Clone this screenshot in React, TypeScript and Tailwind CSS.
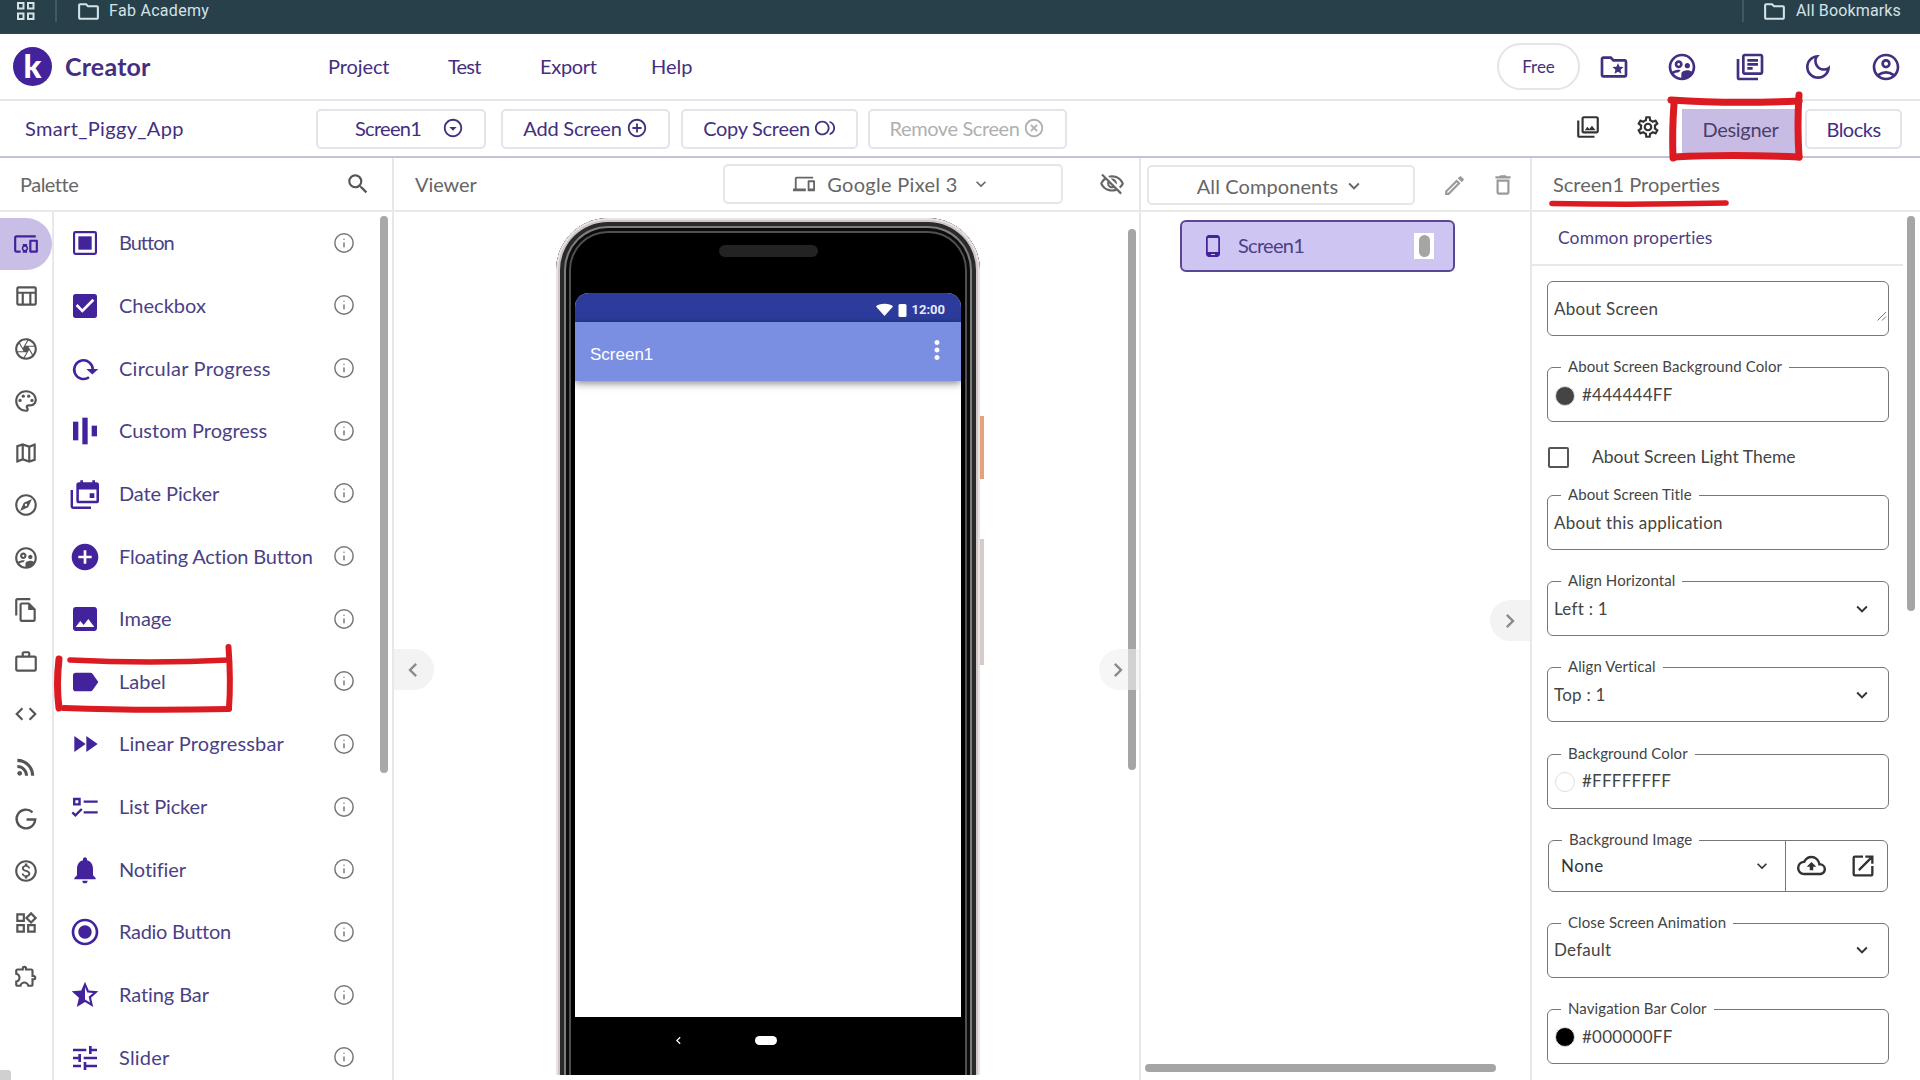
import React from 'react';
import { Info } from 'lucide-react';
import {
  MdAddCircle,
  MdAddCircleOutline,
  MdCheckBox,
  MdCode,
  MdDevices,
  MdDevicesOther,
  MdFastForward,
  MdHighlightOff,
  MdImage,
  MdKeyboardArrowDown,
  MdLabel,
  MdMoreVert,
  MdNotifications,
  MdOpenInNew,
  MdOutlineAccountCircle,
  MdOutlineArrowDropDownCircle,
  MdOutlineBackup,
  MdOutlineCamera,
  MdOutlineDarkMode,
  MdOutlineDelete,
  MdOutlineEdit,
  MdOutlineExplore,
  MdOutlineExtension,
  MdOutlineFileCopy,
  MdOutlineFolder,
  MdOutlineFolderSpecial,
  MdOutlineLibraryBooks,
  MdOutlineMap,
  MdOutlineMonetizationOn,
  MdOutlinePalette,
  MdOutlinePhotoLibrary,
  MdOutlineSettings,
  MdOutlineSupervisedUserCircle,
  MdOutlineTableChart,
  MdOutlineVisibilityOff,
  MdOutlineWidgets,
  MdOutlineWorkOutline,
  MdPhoneAndroid,
  MdRadioButtonChecked,
  MdRssFeed,
  MdSearch,
  MdStarHalf,
  MdToll,
  MdTune,
  MdChevronLeft,
  MdChevronRight,
} from 'react-icons/md';

type IconType = React.ComponentType<{ size?: number; className?: string }>;

const ButtonIcon: IconType = ({ size = 24 }) => (
  <svg width={size} height={size} viewBox="0 0 24 24">
    <rect x="3.8" y="3.8" width="16.4" height="16.4" rx="1" fill="none" stroke="currentColor" strokeWidth="1.6" />
    <rect x="7" y="7" width="10" height="10" fill="currentColor" />
  </svg>
);

const CircularIcon: IconType = ({ size = 24 }) => (
  <svg width={size} height={size} viewBox="0 0 24 24">
    <path d="M15 18.2A7 7 0 1 1 17.9 12.500" fill="none" stroke="currentColor" strokeWidth="1.9" />
    <path d="M13 12h9l-4.500 4.200z" fill="currentColor" />
  </svg>
);

const BarsIcon: IconType = ({ size = 24 }) => (
  <svg width={size} height={size} viewBox="0 0 24 24" fill="currentColor">
    <rect x="3" y="5" width="4" height="14" />
    <rect x="10" y="2" width="4" height="20" />
    <rect x="17" y="8" width="4" height="8" />
  </svg>
);

const DateIcon: IconType = ({ size = 24 }) => (
  <svg width={size} height={size} viewBox="0 0 24 24" fill="currentColor">
    <path
      fillRule="evenodd"
      d="M7.5 3.2h1V1.6h2v1.6h7V1.6h2v1.6h1a2 2 0 0 1 2 2V17a2 2 0 0 1-2 2h-13a2 2 0 0 1-2-2V5.200a2 2 0 0 1 2-2zM7.400 8.600v8.400h13.200V8.600z"
    />
    <path d="M15.500 11.500h3.500v3.500h-3.500zM1.200 9h1.800v12.400h13.500v1.800H3a1.800 1.800 0 0 1-1.800-1.800z" />
  </svg>
);

const ListIcon: IconType = ({ size = 24 }) => (
  <svg width={size} height={size} viewBox="0 0 24 24" fill="none" stroke="currentColor" strokeWidth="1.8">
    <path d="M3.900 6h4v4h-4zM11 8h10.500M11 16h10.500M2.500 16l2.300 2.200L9.600 13.500" />
  </svg>
);

const GoogleIcon: IconType = ({ size = 24 }) => (
  <svg width={size} height={size} viewBox="0 0 24 24" fill="none" stroke="currentColor" strokeWidth="2.2">
    <path d="M18 5.900A8.600 8.600 0 1 0 20.500 12.500H12.500" />
  </svg>
);

const rail: IconType[] = [
  MdDevicesOther,
  MdOutlineTableChart,
  MdOutlineCamera,
  MdOutlinePalette,
  MdOutlineMap,
  MdOutlineExplore,
  MdOutlineSupervisedUserCircle,
  MdOutlineFileCopy,
  MdOutlineWorkOutline,
  MdCode,
  MdRssFeed,
  GoogleIcon,
  MdOutlineMonetizationOn,
  MdOutlineWidgets,
  MdOutlineExtension,
];

const palette: { name: string; icon: IconType; tracking?: string }[] = [
  { name: 'Button', icon: ButtonIcon, tracking: 'tracking-[-1px]' },
  { name: 'Checkbox', icon: MdCheckBox },
  { name: 'Circular Progress', icon: CircularIcon, tracking: 'tracking-[0.25px]' },
  { name: 'Custom Progress', icon: BarsIcon },
  { name: 'Date Picker', icon: DateIcon, tracking: 'tracking-[-0.1px]' },
  { name: 'Floating Action Button', icon: MdAddCircle, tracking: 'tracking-[-0.2px]' },
  { name: 'Image', icon: MdImage },
  { name: 'Label', icon: MdLabel },
  { name: 'Linear Progressbar', icon: MdFastForward, tracking: 'tracking-[0.15px]' },
  { name: 'List Picker', icon: ListIcon, tracking: 'tracking-[-0.15px]' },
  { name: 'Notifier', icon: MdNotifications, tracking: 'tracking-[-0.1px]' },
  { name: 'Radio Button', icon: MdRadioButtonChecked, tracking: 'tracking-[-0.3px]' },
  { name: 'Rating Bar', icon: MdStarHalf, tracking: 'tracking-[-0.1px]' },
  { name: 'Slider', icon: MdTune, tracking: 'tracking-[0.2px]' },
];

const BookmarksBar = () => (
  <div className="flex h-[34px] shrink-0 items-start justify-between border-b border-[#3a4443] bg-[#28404a] font-[Roboto,sans-serif] text-[16px] leading-[22px] text-[#d3e3e6]">
    <div className="flex h-[22px] items-center">
      <svg className="ml-[16px]" width="20" height="22" viewBox="0 0 20 22" fill="none" stroke="currentColor" strokeWidth="2">
        <path d="M2 3h5.500v5.500h-5.500zM12 3h5.500v5.500h-5.500zM2 13.500h5.500v5.500h-5.500zM12 13.500h5.500v5.500h-5.500z" />
      </svg>
      <div className="ml-[19px] h-[22px] w-[2px] bg-[#3f5862]" />
      <MdOutlineFolder size={25} className="ml-[19px]" />
      <span className="ml-[8px] tracking-[0.3px]">Fab Academy</span>
    </div>
    <div className="flex h-[22px] items-center pr-[19px]">
      <div className="h-[22px] w-[2px] bg-[#3f5862]" />
      <MdOutlineFolder size={25} className="ml-[18px]" />
      <span className="ml-[9px] tracking-[0.15px]">All Bookmarks</span>
    </div>
  </div>
);

const Header = () => (
  <div className="flex h-[67px] shrink-0 items-center border-b-2 border-[#e6e6ea] text-[#432f80]">
    <div className="ml-[13px] flex h-[39px] w-[39px] items-center justify-center rounded-full bg-[#42239c] pb-[3px] font-[Lato,sans-serif] text-[33px] font-black leading-none text-white">
      k
    </div>
    <div className="ml-[13px] w-[263px] text-[25px] font-bold tracking-[0.2px]">Creator</div>
    <div className="flex pb-px text-[20px]">
      <span className="w-[120px] tracking-[-0.1px]">Project</span>
      <span className="w-[92px] tracking-[-0.8px]">Test</span>
      <span className="w-[111px] tracking-[-0.3px]">Export</span>
      <span>Help</span>
    </div>
    <div className="ml-auto flex items-center gap-[36px] pr-[18px]">
      <div className="mr-[-18px] flex h-[47px] w-[83px] items-center justify-center rounded-full border-2 border-[#e4e4ea] text-[17px]">Free</div>
      <MdOutlineFolderSpecial size={32} />
      <MdOutlineSupervisedUserCircle size={32} />
      <MdOutlineLibraryBooks size={32} />
      <MdOutlineDarkMode size={32} />
      <MdOutlineAccountCircle size={32} />
    </div>
  </div>
);

const Toolbar = () => (
  <div className="flex h-[57px] shrink-0 items-center border-b-2 border-[#c5c1da] text-[20px] text-[#432f80]">
    <div className="ml-[25px] w-[291px] pb-[2px] tracking-[0.35px]">Smart_Piggy_App</div>
    <div className="flex h-[40px] w-[170px] items-center justify-between rounded-[5px] border-2 border-[#e4e4ea] pb-[2px] pl-[37px] pr-[20px]">
      <span className="tracking-[-0.7px]">Screen1</span>
      <MdOutlineArrowDropDownCircle size={22} />
    </div>
    <div className="ml-[15px] flex h-[40px] w-[169px] items-center justify-center gap-[4px] rounded-[5px] border-2 border-[#e4e4ea] pb-[2px]">
      <span className="tracking-[-0.2px]">Add Screen</span>
      <MdAddCircleOutline size={22} />
    </div>
    <div className="ml-[11px] flex h-[40px] w-[177px] items-center justify-center gap-[4px] rounded-[5px] border-2 border-[#e4e4ea] pb-[2px]">
      <span className="tracking-[-0.3px]">Copy Screen</span>
      <MdToll size={22} className="rotate-180" />
    </div>
    <div className="ml-[10px] flex h-[40px] w-[199px] items-center justify-center gap-[4px] rounded-[5px] border-2 border-[#e4e4ea] pb-[2px] text-[#b0b0b0]">
      <span className="tracking-[-0.4px]">Remove Screen</span>
      <MdHighlightOff size={22} />
    </div>
    <div className="ml-auto flex items-center text-[#333]">
      <MdOutlinePhotoLibrary size={26} className="mb-[4px]" />
      <MdOutlineSettings size={26} className="mb-[4px] ml-[34px] mr-[21px]" />
      <div className="mt-[6px] flex h-[45px] w-[115px] items-center justify-center bg-[#c9bce4] pb-[6px] pl-[2px] tracking-[-0.3px] text-[#4a3f6b]">Designer</div>
      <div className="ml-[8px] mr-[18px] flex h-[40px] w-[97px] items-center justify-center rounded-[5px] border-2 border-[#e4e4ea] text-[#432f80]">
        <span className="tracking-[-0.5px]">Blocks</span>
      </div>
    </div>
  </div>
);

const PalettePanel = () => (
  <div className="flex w-[394px] shrink-0 flex-col border-r-2 border-[#e8e8ea]">
    <div className="flex h-[54px] shrink-0 items-center justify-between border-b-2 border-[#e9e9e7] pl-[20px] pr-[21px] text-[20px] text-[#666]">
      <span className="tracking-[-0.5px]">Palette</span>
      <MdSearch size={26} className="text-[#555]" />
    </div>
    <div className="flex min-h-0 flex-1">
      <div className="w-[54px] shrink-0 border-r-2 border-[#e8e8ea] pt-[6px] text-[#555]">
        {rail.map((Icon, i) => (
          <div
            key={i}
            className={
              i === 0
                ? 'flex h-[52.25px] w-[52px] items-center justify-center rounded-r-full bg-[#c9bfe6] text-[#42239c]'
                : 'flex h-[52.25px] w-[52px] items-center justify-center'
            }
          >
            <Icon size={26} />
          </div>
        ))}
      </div>
      <div className="min-w-0 flex-1">
        {palette.map(({ name, icon: Icon, tracking }) => (
          <div key={name} className="flex h-[62.65px] items-center pl-[15px] pr-[25px] text-[20px] text-[#4b3f86]">
            <div className="mr-[18px] text-[#42239c]">
              <Icon size={32} />
            </div>
            <span className={`whitespace-nowrap pb-[2px] ${tracking ?? ''}`}>{name}</span>
            <Info size={22} strokeWidth={1.6} className="mb-px ml-auto shrink-0 text-[#777]" />
          </div>
        ))}
      </div>
      <div className="mr-[4px] mt-[4px] h-[557px] w-[8px] rounded-full bg-[#a8a8a8]" />
    </div>
  </div>
);

const Phone = () => (
  <div className="relative h-[857px] w-[424px] px-[19px] pt-[75px]">
    <div className="absolute inset-0 overflow-hidden rounded-t-[52px]">
      <div className="h-[900px] rounded-t-[52px] bg-black shadow-[inset_0_0_0_2px_#e9e3e4,inset_0_0_0_4px_#cfc6c8,inset_0_0_0_8px_#2a2a2a,inset_0_0_0_10px_#7d7d7d,inset_0_0_0_13px_#0c0c0c,inset_0_0_0_15px_#505050]" />
    </div>
    <div className="absolute left-[163px] top-[27px] h-[12px] w-[99px] rounded-full bg-[#232323]" />
    <div className="absolute left-[15px] top-[20px] h-[30px] w-[394px]" />
    <div className="absolute left-[424px] top-[198px] h-[63px] w-[4px] bg-[#e2a27c]" />
    <div className="absolute left-[424px] top-[321px] h-[126px] w-[4px] bg-[#d6cacb]" />
    <div className="relative flex h-[724px] flex-col overflow-hidden rounded-t-[14px] bg-white">
      <div className="flex h-[29px] shrink-0 items-center justify-end bg-[#2d3c9c] pr-[16px] pt-[4px] font-[Roboto,sans-serif] text-[13px] font-bold text-[#e6e9fa]">
        <svg width="34" height="16" viewBox="0 0 34 16" fill="#fff">
          <path d="M0 4.500C2.500 0.800 14.500 0.800 17 4.500L8.500 14z" />
          <rect x="22.500" y="2" width="8" height="13" rx="1.500" />
        </svg>
        <span className="ml-[2px]">12:00</span>
      </div>
      <div className="flex h-[59px] shrink-0 items-center justify-between bg-[#7a8ee2] pl-[15px] pr-[9px] font-['Liberation_Sans',sans-serif] text-[17px] text-white shadow-[0_2px_8px_rgba(0,0,0,0.5)]">
        <span className="pt-[6px]">Screen1</span>
        <MdMoreVert size={30} className="mb-[3px]" />
      </div>
    </div>
    <div className="relative flex h-[46px] items-center text-white">
      <MdChevronLeft size={15} className="ml-[96px]" />
      <div className="ml-[69px] h-[9px] w-[22px] rounded-full bg-white" />
    </div>
  </div>
);

const Viewer = () => (
  <div className="relative flex w-[747px] shrink-0 flex-col border-r-2 border-[#e8e8ea]">
    <div className="flex h-[54px] shrink-0 items-center border-b-2 border-[#e9e9e7] pl-[21px] text-[20px] text-[#666]">
      <span className="w-[308px] tracking-[-0.1px]">Viewer</span>
      <div className="flex h-[40px] w-[340px] items-center justify-center rounded-[5px] border-2 border-[#e6e6e6] pr-[2px]">
        <MdDevices size={22} />
        <span className="ml-[12px] mr-[13px] tracking-[0.3px]">Google Pixel 3</span>
        <MdKeyboardArrowDown size={20} />
      </div>
      <MdOutlineVisibilityOff size={26} className="ml-[36px]" />
    </div>
    <div className="flex min-h-0 flex-1">
      <div className="ml-[162px] mt-[6px]">
        <Phone />
      </div>
      <div className="ml-auto mr-[3px] mt-[17px] h-[541px] w-[8px] rounded-full bg-[#a5a5a5]" />
    </div>
    <div className="absolute left-0 top-[491px] flex h-[41px] w-[40px] items-center justify-center rounded-r-full bg-[#f3f3f3] pr-[3px] text-[#8a8a8a]">
      <MdChevronLeft size={28} />
    </div>
    <div className="absolute right-0 top-[491px] flex h-[41px] w-[40px] items-center justify-center rounded-l-full bg-[#f0f0f0]/60 pr-[2px] text-[#8a8a8a]">
      <MdChevronRight size={28} />
    </div>
  </div>
);

const Components = () => (
  <div className="relative flex w-[391px] shrink-0 flex-col border-r-2 border-[#e8e8ea]">
    <div className="flex h-[54px] shrink-0 items-center border-b-2 border-[#e9e9e7] pl-[6px] text-[20px] text-[#666]">
      <div className="mt-[2px] flex h-[40px] w-[268px] items-center justify-center rounded-[5px] border-2 border-[#e6e6e6] pt-[2px]">
        <span className="tracking-[0.1px]">All Components</span>
        <MdKeyboardArrowDown size={22} className="ml-[5px]" />
      </div>
      <MdOutlineEdit size={25} className="ml-[27px] mt-[2px] text-[#999]" />
      <MdOutlineDelete size={26} className="ml-[23px] mt-[2px] text-[#999]" />
    </div>
    <div className="flex min-h-0 flex-1 flex-col">
      <div className="ml-[39px] mt-[8px] flex h-[52px] w-[275px] items-center rounded-[6px] border-2 border-[#5a4694] bg-[#cfc5f3] pl-[19px] pr-[19px] text-[20px] text-[#4b3f86]">
        <MdPhoneAndroid size={24} className="text-[#42239c]" />
        <span className="ml-[13px] pb-[2px] tracking-[-0.7px]">Screen1</span>
        <div className="ml-auto flex h-[26px] w-[20px] items-center justify-center bg-white">
          <div className="h-[22px] w-[11px] rounded-full bg-[#a5a5a5]" />
        </div>
      </div>
      <div className="mb-[8px] ml-[4px] mt-auto h-[8px] w-[351px] rounded-full bg-[#a5a5a5]" />
    </div>
    <div className="absolute right-0 top-[442px] flex h-[41px] w-[40px] items-center justify-center rounded-l-full bg-[#f3f3f3] text-[#8a8a8a]">
      <MdChevronRight size={28} />
    </div>
  </div>
);

interface FieldProps {
  label?: string;
  value: string;
  dot?: string;
  select?: boolean;
}

const Field: React.FC<FieldProps> = ({ label, value, dot, select }) => (
  <div className="relative flex h-[55px] w-[342px] shrink-0 items-center rounded-[6px] border-[1.5px] border-[#777] pl-[6px] text-[17px] text-[#444]">
    {label && <span className="absolute left-[13px] top-[-13px] bg-white px-[7px] text-[15px] leading-[22px] tracking-[0.1px]">{label}</span>}
    {dot && <span className="ml-px mr-[7px] mt-[2px] h-[20px] w-[20px] rounded-full border border-[#ddd]" style={{ background: dot }} />}
    <span className="tracking-[0.25px]">{value}</span>
    {select && <MdKeyboardArrowDown size={22} className="ml-auto mr-[15px] text-[#333]" />}
    {!label && (
      <svg className="absolute bottom-[14px] right-[1px]" width="10" height="10" viewBox="0 0 10 10" stroke="#777">
        <path d="M0.500 9.500L9 1M5 9.500L9 5.500" />
      </svg>
    )}
  </div>
);

const Properties = () => (
  <div className="flex min-w-0 flex-1 flex-col">
    <div className="flex h-[54px] shrink-0 items-center border-b-2 border-[#e9e9e7] pl-[21px] text-[20px] text-[#666]">
      <span>Screen1 Properties</span>
    </div>
    <div className="flex min-h-0 flex-1">
      <div className="flex w-[371px] shrink-0 flex-col">
        <div className="flex h-[54px] shrink-0 items-center border-b-2 border-[#e8e8ea] pl-[26px] pt-px text-[17.5px] tracking-[0.1px] text-[#4b3f86]">Common properties</div>
        <div className="flex flex-col pl-[15px] pt-[15px]">
          <Field value="About Screen" />
          <div className="h-[31px]" />
          <Field label="About Screen Background Color" value="#444444FF" dot="#444444" />
          <div className="flex h-[73px] items-center pb-[3px] text-[17.5px] text-[#444]">
            <div className="ml-px mr-[23px] h-[21px] w-[21px] rounded-[2px] border-2 border-[#555]" />
            About Screen Light Theme
          </div>
          <div className="flex flex-col gap-[31.2px]">
            <Field label="About Screen Title" value="About this application" />
            <Field label="Align Horizontal" value="Left : 1" select />
            <Field label="Align Vertical" value="Top : 1" select />
            <Field label="Background Color" value="#FFFFFFFF" dot="#FFFFFF" />
          </div>
          <div className="relative ml-[1px] mt-[31px] flex h-[52px] w-[340px] items-center rounded-[6px] border-[1.5px] border-[#777] text-[17px] text-[#333]">
            <span className="absolute left-[13px] top-[-13px] bg-white px-[7px] text-[15px] leading-[22px] tracking-[0.1px] text-[#444]">Background Image</span>
            <div className="flex h-full w-[237px] items-center justify-between border-r-[1.5px] border-[#777] pl-[12px] pr-[13px]">
              <span className="tracking-[0.5px]">None</span>
              <MdKeyboardArrowDown size={20} />
            </div>
            <MdOutlineBackup size={29} className="ml-[11px]" />
            <MdOpenInNew size={28} className="ml-[23px]" />
          </div>
          <div className="mt-[31px] flex flex-col gap-[31.2px]">
            <Field label="Close Screen Animation" value="Default" select />
            <Field label="Navigation Bar Color" value="#000000FF" dot="#000000" />
          </div>
        </div>
      </div>
      <div className="ml-[4px] mt-[4px] h-[395px] w-[8px] rounded-full bg-[#a5a5a5]" />
    </div>
  </div>
);

// hand-drawn marker strokes laid over the editor
const Marks = () => (
  <svg className="pointer-events-none absolute left-0 top-0" width="1920" height="1080" fill="none" stroke="#dc1a21" strokeWidth="7" strokeLinecap="round" strokeLinejoin="round">
    <path d="M1671 100Q1730 104 1799 101" />
    <path d="M1799 95Q1797 125 1799 157" />
    <path d="M1674 104Q1672 130 1673 158" />
    <path d="M1674 157Q1730 154 1799 157" />
    <path d="M1552 203.500Q1640 205 1726 203" strokeWidth="5.500" />
    <path d="M59 659Q56 685 59 708" />
    <path d="M70 660Q150 664 229 660" strokeWidth="5.500" />
    <path d="M228.500 647Q231 680 229 708" strokeWidth="6" />
    <path d="M64 708Q140 711 229 709" strokeWidth="6" />
  </svg>
);

export default function App() {
  return (
    <div className="relative flex h-[1080px] w-[1920px] flex-col overflow-hidden bg-white font-[Lato,sans-serif]">
      <BookmarksBar />
      <Header />
      <Toolbar />
      <div className="flex min-h-0 flex-1">
        <PalettePanel />
        <Viewer />
        <Components />
        <Properties />
      </div>
      <div className="absolute bottom-0 left-0 h-[10px] w-[11px] rounded-tr-[3px] bg-[#d0d0d0]" />
      <Marks />
    </div>
  );
}
